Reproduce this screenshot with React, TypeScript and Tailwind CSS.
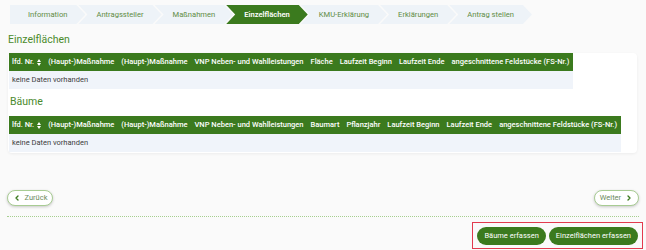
import { ChevronLeft, ChevronRight } from "lucide-react";

const steps = [
  "Information",
  "Antragssteller",
  "Maßnahmen",
  "Einzelflächen",
  "KMU-Erklärung",
  "Erklärungen",
  "Antrag stellen",
];

const colsFlaechen = [
  "(Haupt-)Maßnahme",
  "(Haupt-)Maßnahme",
  "VNP Neben- und Wahlleistungen",
  "Fläche",
  "Laufzeit Beginn",
  "Laufzeit Ende",
  "angeschnittene Feldstücke (FS-Nr.)",
];

const colsBaeume = [
  "(Haupt-)Maßnahme",
  "(Haupt-)Maßnahme",
  "VNP Neben- und Wahlleistungen",
  "Baumart",
  "Pflanzjahr",
  "Laufzeit Beginn",
  "Laufzeit Ende",
  "angeschnittene Feldstücke (FS-Nr.)",
];

function Step({ label, index }: { label: string; index: number }) {
  const active = label === "Einzelflächen";
  const first = index === 0;
  return (
    <div
      className={
        "flex h-[19px] items-center pl-[18px] pr-[18px] text-[7.6px] whitespace-nowrap " +
        (first
          ? "[clip-path:polygon(0_0,calc(100%_-_9px)_0,100%_50%,calc(100%_-_9px)_100%,0_100%)] "
          : "-ml-[7px] [clip-path:polygon(0_0,calc(100%_-_9px)_0,100%_50%,calc(100%_-_9px)_100%,0_100%,9px_50%)] ") +
        (active ? "bg-[#3b7a1e] font-semibold text-white" : "bg-[#eef3f8] text-[#5f8c45]")
      }
    >
      {label}
    </div>
  );
}

function SortIcon() {
  return (
    <svg width="4" height="7" viewBox="0 0 4 7" className="ml-[3px] inline-block">
      <path d="M0 3 L2 0 L4 3 Z" fill="white" />
      <path d="M0 4 L2 7 L4 4 Z" fill="white" />
    </svg>
  );
}

function DataTable({ cols }: { cols: string[] }) {
  return (
    <table className="border-collapse">
      <thead>
        <tr className="h-[18px] bg-[#3b7a1e] text-[7.5px] font-medium text-white">
          <th className="pl-[3px] pr-[3.5px] text-left font-medium whitespace-nowrap">
            <span className="inline-flex items-center">
              lfd. Nr.
              <SortIcon />
            </span>
          </th>
          {cols.map((c, i) => (
            <th key={i} className="px-[3.5px] text-left font-medium whitespace-nowrap">
              {c}
            </th>
          ))}
        </tr>
      </thead>
      <tbody>
        <tr className="h-[18px] bg-[#f0f4fa]">
          <td colSpan={cols.length + 1} className="pl-[3px] text-[7.5px] text-[#3d3d3d]">
            keine Daten vorhanden
          </td>
        </tr>
      </tbody>
    </table>
  );
}

export default function App() {
  return (
    <div className="min-h-screen bg-[#fafafa] pt-[5px] font-['Roboto',sans-serif]">
      {/* Stepper */}
      <div className="flex pl-[10px]">
        {steps.map((s, i) => (
          <Step key={s} label={s} index={i} />
        ))}
      </div>

      <h2 className="mt-[8px] pl-[8px] text-[10.5px] leading-[16px] text-[#4a8a2c]">Einzelflächen</h2>

      {/* Tables card */}
      <div className="mt-[5px] ml-[8px] mr-[9px] rounded-[4px] bg-white pb-[1px] pl-[1px] shadow-[0_1px_3px_rgba(0,0,0,0.06)]">
        <DataTable cols={colsFlaechen} />
        <h2 className="mt-[5px] pl-[1px] text-[10.5px] leading-[16px] text-[#4a8a2c]">Bäume</h2>
        <div className="mt-[6px]">
          <DataTable cols={colsBaeume} />
        </div>
      </div>

      {/* Navigation */}
      <div className="mt-[37px] flex items-center justify-between px-[7px]">
        <button className="flex h-[16px] w-[46px] items-center justify-center gap-[4px] rounded-full border border-[#a8cc93] bg-white text-[7.5px] text-[#6b8a5c] shadow-[0_1px_3px_rgba(0,0,0,0.2)]">
          <ChevronLeft size={8} strokeWidth={4} className="text-[#3b7a1e]" />
          Zurück
        </button>
        <button className="flex h-[16px] w-[45px] items-center justify-center gap-[4px] rounded-full border border-[#a8cc93] bg-white text-[7.5px] text-[#6b8a5c] shadow-[0_1px_3px_rgba(0,0,0,0.2)]">
          Weiter
          <ChevronRight size={8} strokeWidth={4} className="text-[#3b7a1e]" />
        </button>
      </div>

      <div className="mx-[7px] mt-[10px] border-t border-dotted border-[#a6cf8f]" />

      <div className="mt-[5px] flex justify-end pr-[3px]">
        <div className="flex gap-[3px] border-[1.5px] border-[#e23a4e] pt-[4px] pr-[4px] pb-[3px] pl-[4px]">
          <button className="h-[18px] rounded-full bg-[#3b7a1e] px-[7px] text-[7.5px] text-white">Bäume erfassen</button>
          <button className="h-[18px] rounded-full bg-[#3b7a1e] px-[7px] text-[7.5px] text-white">Einzelflächen erfassen</button>
        </div>
      </div>
    </div>
  );
}
